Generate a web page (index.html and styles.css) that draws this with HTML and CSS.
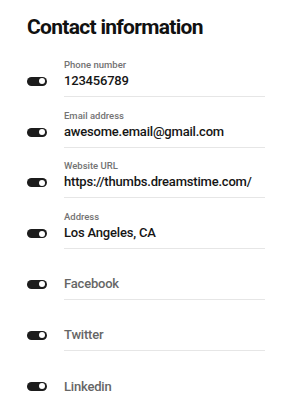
FILE: index.html
```html
<!DOCTYPE html>
<html>
<head>
    <meta charset="UTF-8">
    <title>Contact information</title>
    <link rel="stylesheet" href="styles.css">
</head>
<body>
    <div class="panel">
        <h2 class="title">Contact information</h2>
        <ul class="contact-list">
            <li class="row">
                <span class="toggle on"></span>
                <div class="field">
                    <span class="label">Phone number</span>
                    <span class="value">123456789</span>
                </div>
            </li>
            <li class="row">
                <span class="toggle on"></span>
                <div class="field">
                    <span class="label">Email address</span>
                    <span class="value">awesome.email@gmail.com</span>
                </div>
            </li>
            <li class="row">
                <span class="toggle on"></span>
                <div class="field">
                    <span class="label">Website URL</span>
                    <span class="value">https://thumbs.dreamstime.com/</span>
                </div>
            </li>
            <li class="row">
                <span class="toggle on"></span>
                <div class="field">
                    <span class="label">Address</span>
                    <span class="value">Los Angeles, CA</span>
                </div>
            </li>
            <li class="row">
                <span class="toggle on"></span>
                <div class="field">
                    <span class="value empty">Facebook</span>
                </div>
            </li>
            <li class="row">
                <span class="toggle on"></span>
                <div class="field">
                    <span class="value empty">Twitter</span>
                </div>
            </li>
            <li class="row">
                <span class="toggle on"></span>
                <div class="field">
                    <span class="value empty">Linkedin</span>
                </div>
            </li>
        </ul>
    </div>
</body>
</html>
```

FILE: styles.css
```css
body{margin:0;font-family:Roboto,"Noto Sans",sans-serif;background:#fff;}
ul,li{margin:0;padding:0;list-style:none;}
h2{margin:0;}

.panel{
    padding:14px 38px 0 27px;
}
.title{
    font-size:21px;
    line-height:26px;
    font-weight:700;
    letter-spacing:-0.7px;
    color:#111;
    margin-bottom:6px;
}
.contact-list .row{
    display:flex;
    align-items:flex-end;
}
.row .toggle{
    position:relative;
    flex:none;
    width:20px;
    height:9px;
    margin:0 17px 11px 0;
    border-radius:5px;
    background-color:#1c1c1c;
}
.row .toggle.on::after{
    content:'';
    position:absolute;
    top:1.5px;
    right:2px;
    width:6px;
    height:6px;
    border-radius:50%;
    background-color:#fff;
}
.row .field{
    flex:1;
    display:flex;
    flex-direction:column;
    justify-content:flex-end;
    box-sizing:border-box;
    height:50.8px;
    padding-bottom:7px;
    border-bottom:1px solid #e6e6e6;
}
.row:last-child .field{
    border-bottom:none;
}
.field .label{
    font-size:9.5px;
    line-height:11px;
    font-weight:500;
    color:#737373;
    margin-bottom:3px;
}
.field .value{
    font-size:13px;
    line-height:16px;
    font-weight:500;
    letter-spacing:-0.2px;
    color:#151515;
}
.field .value.empty{
    color:#666;
}
```
